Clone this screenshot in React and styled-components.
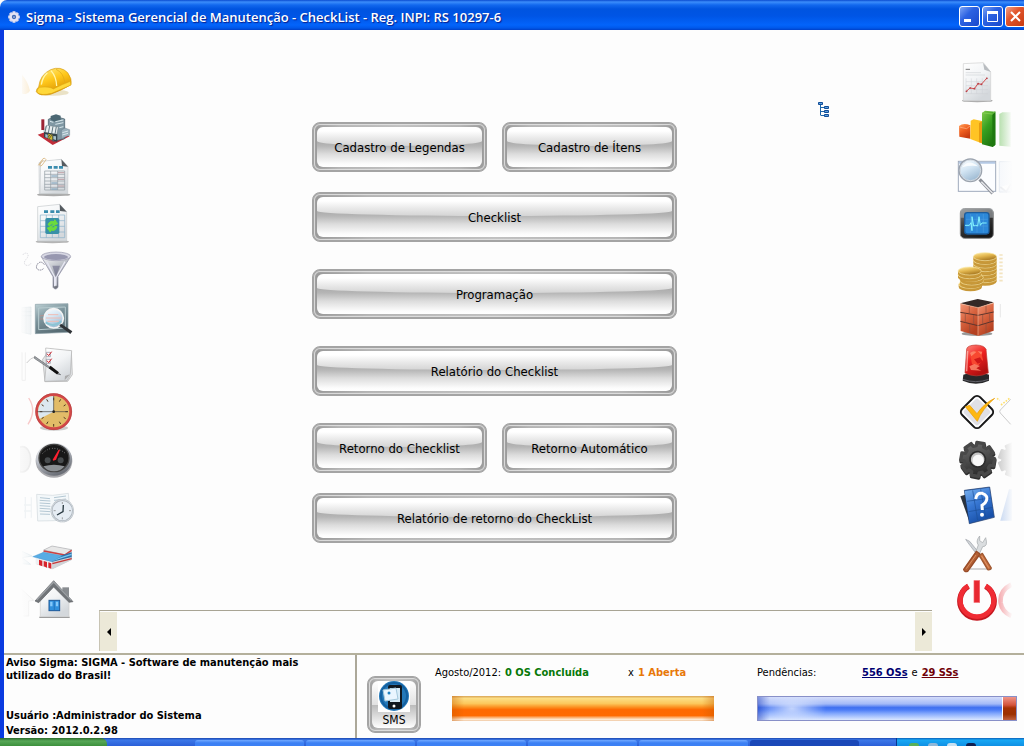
import React from "react";
import styled, { createGlobalStyle, css } from "styled-components";

const GlobalStyle = createGlobalStyle`
  *, *::before, *::after { box-sizing: border-box; }
  body { margin: 0; background: #fdfdfd; }
  button { font: inherit; color: inherit; padding: 0; border: 0; background: none; cursor: pointer; }
`;

const ui = `"DejaVu Sans Condensed", "DejaVu Sans", sans-serif`;

const Window = styled.div`
  display: flex;
  flex-direction: column;
  min-height: 100vh;
  background: #fdfdfd;
  color: #000;
  font-family: ${ui};
  font-size: 11px;
`;

const TitleBar = styled.header`
  display: flex;
  align-items: center;
  height: 30px;
  padding: 3px 0 0 7px;
  overflow: hidden;
  border-top-left-radius: 7px;
  background: linear-gradient(#0a4bd0 0, #3b8dfb 2px, #1268ee 5px, #0054e0 9px, #0055e5 16px, #0364fb 25px, #0058ea 28px, #0040c8 30px);
`;

const Title = styled.h1`
  flex: 1;
  margin: 0 0 0 5px;
  color: #fff;
  font: 600 13px/20px "Open Sans", "Noto Sans", sans-serif;
  text-shadow: 1px 1px 1px #0a1f8a;
  white-space: nowrap;
`;

const Controls = styled.div`
  display: flex;
  gap: 2px;
  margin-right: -2px;
`;

const ControlButton = styled.button`
  display: flex;
  width: 21px;
  height: 21px;
  border: 1px solid #fff;
  border-radius: 3px;
  background: ${(p) =>
    p.$close
      ? "linear-gradient(135deg, #f0a088, #e2552c 40%, #c63a10)"
      : "linear-gradient(135deg, #7da4f5, #2c62e2 40%, #1a48cc)"};
`;

const Frame = styled.div`
  flex: 1;
  display: flex;
  flex-direction: column;
  border-left: 4px solid #0a3be0;
`;

const Workspace = styled.main`
  flex: 1;
  display: flex;
`;

const SideBar = styled.nav`
  display: flex;
  flex-direction: column;
  flex: none;
  width: ${(p) => (p.$right ? 92 : 95)}px;
  padding: 29px 0 0 ${(p) => (p.$right ? 24 : 16)}px;
`;

const IconButton = styled.button`
  display: block;
  width: 56px;
  height: 47px;
  svg { display: block; width: 56px; height: 47px; }
`;

const Center = styled.div`
  flex: 1;
  display: flex;
  flex-direction: column;
`;

const Canvas = styled.div`
  flex: 1;
  display: grid;
  grid-template-columns: 213fr minmax(auto, 365px) 255fr;
  padding-top: 72px;
  align-items: start;
`;

const Menu = styled.div`
  grid-column: 2;
  display: grid;
  gap: 27px;
  margin-top: 20px;
`;

const MenuGroup = styled.div`
  display: grid;
  gap: 20px;
`;

const Pair = styled.div`
  display: grid;
  grid-template-columns: 1fr 1fr;
  gap: 15px;
`;

const glossFrame = css`
  border: 1px solid #a4a4a4;
  border-radius: 8px;
  background: linear-gradient(90deg, #989898, #b4b4b4 15%, #c0c0c0 50%, #b4b4b4 85%, #989898);
  box-shadow: inset 0 0 0 1px #a4a4a4, inset 0 0 1px 2px #e0e0e0;
`;

const GlossButton = styled.button`
  ${glossFrame}
  height: 50px;
  padding: 4px;
  font-size: 13px;
`;

const GlossFace = styled.span`
  position: relative;
  display: flex;
  align-items: center;
  justify-content: center;
  height: 40px;
  overflow: hidden;
  border-radius: 6px;
  background: linear-gradient(#a8a8a8 13px, #b6b6b6 19px, #dcdcdc 27px, #fcfcfc 37px, #fff);
  &::before {
    content: "";
    position: absolute;
    inset: 0 0 auto;
    height: 19px;
    border-radius: 0 0 50% 50% / 0 0 5px 5px;
    background: linear-gradient(#fff 4px, #eaeaea 11px, #d4d4d4);
  }
`;

const GlossLabel = styled.span`
  position: relative;
`;

const TreeButton = styled.button`
  justify-self: start;
  margin-left: 141px;
  svg { display: block; }
`;

const Strip = styled.div`
  display: flex;
  justify-content: space-between;
  height: 41px;
  margin-bottom: 2px;
  padding-top: 1px;
  border-top: 1px solid #a8a494;
  border-left: 1px solid #c8c4b4;
`;

const StripArrow = styled.button`
  display: flex;
  align-items: center;
  justify-content: center;
  width: 17px;
  background: #ece9d8;
`;

const Footer = styled.footer`
  display: flex;
  border-top: 2px solid #b4b09c;
`;

const Notice = styled.section`
  display: flex;
  flex-direction: column;
  justify-content: space-between;
  flex: none;
  width: 353px;
  height: 83px;
  padding: 1px 0 0 2px;
  border-right: 2px solid #aca899;
  font-weight: 700;
  p { margin: 0; line-height: 13px; }
  div p { line-height: 15px; }
`;

const Status = styled.section`
  flex: 1;
  display: flex;
  padding: 9px 7px 0 10px;
`;

const SmsButton = styled.button`
  ${glossFrame}
  flex: none;
  width: 54px;
  height: 57px;
  margin: 12px 14px 0 0;
  padding: 4px;
  font-size: 12px;
`;

const SmsFace = styled.span`
  display: flex;
  flex-direction: column;
  align-items: center;
  height: 47px;
  border-radius: 6px;
  background: linear-gradient(#fff, #e2e2e2 50%, #bcbcbc 52%, #fff);
  line-height: 16px;
`;

const Meter = styled.div`
  flex: ${(p) => p.$grow} 1 0;
  margin-left: ${(p) => p.$gap || 0}px;
`;

const MeterText = styled.div`
  display: flex;
  height: 16px;
  margin-bottom: 16px;
  line-height: 18px;
  white-space: nowrap;
`;

const Caption = styled.span`
  min-width: ${(p) => p.$width || 0}px;
`;

const Count = styled.strong`
  min-width: ${(p) => p.$width || 0}px;
  color: ${(p) => p.$color};
`;

const CountLink = styled.a`
  color: ${(p) => p.$color};
  font-weight: 700;
  margin-right: 4px;
`;

const Joiner = styled.span`
  margin-right: 4px;
`;

const OrangeBar = styled.div`
  height: 25px;
  margin-left: 17px;
  background:
    linear-gradient(90deg, rgba(200, 90, 0, 0.4), transparent 12px, transparent calc(100% - 12px), rgba(200, 90, 0, 0.4)),
    linear-gradient(#e0b060 1px, #fce088 2px, #fcc85c 30%, #fc9020 45%, #fe6800 55%, #fe6a00 78%, #fcc08c 88%, #fff4e4 96%, #e8b080);
`;

const SplitBar = styled.div`
  display: flex;
  height: 25px;
  border: 1px solid #8890c8;
`;

const BlueSegment = styled.div`
  flex: 556 1 0;
  background:
    radial-gradient(ellipse 34px 20px at 34px 50%, rgba(216, 228, 255, 0.85), transparent),
    linear-gradient(90deg, rgba(40, 70, 190, 0.5), transparent 12px),
    linear-gradient(#d4dcfa, #a4baf8 30%, #4070f0 46%, #4c7cf6 56%, #84a8fc 72%, #dce8ff);
`;

const RedSegment = styled.div`
  flex: 29 1 0;
  border-left: 1px solid #fff;
  background: linear-gradient(#f09488, #d4543c 35%, #a43004 48%, #9c3000 75%, #c06040);
`;

const TaskBar = styled.div`
  display: flex;
  height: 8px;
  background: linear-gradient(#1c48b0, #3c78e8 2px, #2a5fd8);
`;

const Start = styled.div`
  width: 107px;
  margin-right: 88px;
  border-top-right-radius: 6px;
  background: linear-gradient(#2c6a2c, #58a858 3px, #3c903c);
`;

const Task = styled.div`
  flex: 0 1 109px;
  margin: 2px 2px 0 0;
  border-radius: 3px 3px 0 0;
  background: ${(p) => (p.$active ? "#1a48b8" : "linear-gradient(#70a8ff, #3c80f4 3px)")};
`;

const Tray = styled.div`
  display: flex;
  align-items: flex-end;
  justify-content: space-between;
  flex: 0 0 128px;
  margin-left: auto;
  padding: 0 48px 0 12px;
  border-left: 1px solid #0a3890;
  background: linear-gradient(#0c60b8, #18a8f4 2px, #1090e4);
`;

const TrayDot = styled.i`
  width: 10px;
  height: 3px;
  border-radius: 4px 4px 0 0;
  background: ${(p) => p.$color};
`;

/* Shared gradients for the icon set */
const GRADIENTS = {
  yellow: ["#fff08a", "#ffc81c", "#d89000"],
  steel: ["#fafafa", "#b8bcc4", "#6c7078"],
  paper: ["#ffffff", "#f2f4f6", "#d4d8dc"],
  red: ["#ff8c80", "#ee2020", "#b01010"],
  green: ["#86cc50", "#38a020", "#207810"],
  orange: ["#ffa05c", "#f06020", "#c83c10"],
  blue: ["#a0dcff", "#3890dc", "#1450a4"],
  dark: ["#888888", "#3c3c3c", "#181818"],
  gear: ["#707070", "#505050", "#2c2c2c"],
  glass: ["#ffffff", "#d4e6f4", "#a0bcd4"],
  gold: ["#ffeca0", "#e4b850", "#a87820"],
  brick: ["#f49878", "#d86440", "#b44020"],
  screen: ["#bcd0d4", "#7c949c", "#586c74"],
  help: ["#7cb4f0", "#3878d4", "#1850a8"],
};

const Defs = () => (
  <svg width="0" height="0" aria-hidden="true" style={{ display: "block", height: 0 }}>
    <defs>
      {Object.entries(GRADIENTS).map(([name, [a, b, c]]) => (
        <linearGradient key={name} id={name} x1="0" y1="0" x2="0.5" y2="1">
          <stop offset="0" stopColor={a} />
          <stop offset="0.5" stopColor={b} />
          <stop offset="1" stopColor={c} />
        </linearGradient>
      ))}
      <linearGradient id="fadeLeft">
        <stop offset="0" stopColor="#fdfdfd" />
        <stop offset="1" stopColor="#fdfdfd" stopOpacity="0.5" />
      </linearGradient>
      <linearGradient id="fadeRight">
        <stop offset="0" stopColor="#fdfdfd" stopOpacity="0.4" />
        <stop offset="1" stopColor="#fdfdfd" />
      </linearGradient>
    </defs>
  </svg>
);

const g = (name) => `url(#${name})`;

const Sheet = () => (
  <>
    <ellipse cx="161" cy="404" rx="50" ry="5" fill="#aaa" />
    <path d="M122 304l62-6 20 22-1 81h-83z" fill={g("paper")} stroke="#c4c8cc" strokeWidth="2" />
    <path d="M184 298l20 22-18-2z" fill="#555b60" />
    <path d="M144 318h12v8h-12zM161 318h12v8h-12zM177 318h12v8h-12z" fill="#3a8cae" />
  </>
);

const leftIcons = [
  ["Capacete", -3, (
    <>
      <path d="M66 44q18 20 24 48q-10 14-24 9z" fill="#f8d8a0" />
      <rect x="58" y="40" width="40" height="66" fill={g("fadeLeft")} />
      <ellipse cx="160" cy="98" rx="46" ry="9" fill="#d8c890" opacity=".5" />
      <path d="M116 81q4-37 36-52q30-12 51 9q14 19 10 36q-22 14-61 29q-34 7-43-8q0-9 7-14z" fill={g("yellow")} stroke="#d49a10" strokeWidth="2" />
      <path d="M118 82q31-4 42 5q29-15 51-23l2 11q-28 12-58 25q-33 8-44-3q-1-8 7-15z" fill="#ffd83a" stroke="#d8a010" strokeWidth="1.5" />
      <path d="M142 38q-15 14-18 36M153 32q16 18 17 46" fill="none" stroke="#fff6ac" strokeWidth="4" />
      <path d="M168 28q23 10 26 39" fill="none" stroke="#e0a818" strokeWidth="2" />
    </>
  )],
  ["Fábrica", 138, (
    <>
      <path d="M113 224l47-16 49 21-51 26z" fill="#c02c38" />
      <path d="M124 178h9v32h-9z" fill="#9c2434" />
      <path d="M145 178l20-9 29 8v59l-34 8-15-12z" fill="#8098a4" stroke="#3c5460" strokeWidth="2" />
      <path d="M152 168l16-5 14 4v13l-17 5-13-5z" fill="#4c6874" />
      <path d="M184 210l11-6 14 5v17l-25 10z" fill="#9ab0bc" stroke="#506874" />
      <path d="M131 213l9-17 35 5-5 23-35-5z" fill="#e8eef0" stroke="#506068" />
      <path d="M139 197l-4 20M149 198l-4 21M159 199l-4 22M169 200l-4 22" stroke="#607880" strokeWidth="3" />
      <path d="M132 216l40 7v23l-40-14z" fill="#34444c" />
      <path d="M136 222l7 2v10l-7-2zM160 228l8 1v11l-8-2z" fill="#a8c4cc" />
      <path d="M145 221l12 3v16l-12-4z" fill="#d4bc30" />
      <path d="M147 237l9-13M145 231l7-9" stroke="#333" strokeWidth="2" />
      <path d="M150 184l10 3M166 185l24-5M166 193l24-5M178 203l12-3M187 218l17-5M187 225l17-5" stroke="#d8e8ec" strokeWidth="3" />
    </>
  )],
  ["Planilha", 279, (
    <>
      <path d="M117 308l67-9v103h-66z" fill="#eef0f2" stroke="#c4c8cc" strokeWidth="2" />
      <Sheet />
      <path d="M134 333h60v57h-60zM134 343h60M134 353h60M134 363h60M134 373h60M134 382h60M152 333v57M173 333v57" fill="none" stroke="#909aa2" strokeWidth="2" />
      <path d="M174 338h19M174 358h19M174 378h19" stroke="#a87880" strokeWidth="2" />
      <path d="M154 348h18M154 369h18M154 387h18" stroke="#7098b4" strokeWidth="3" />
      <path d="M115 316l14-20q6-4 9 3l-12 17q-5 4-8-1l12-15" fill="none" stroke="#d8b47c" strokeWidth="2.5" />
    </>
  )],
  ["Planilha atualizada", 420, (
    <>
      <ellipse cx="157" cy="545" rx="50" ry="5" fill="#b4b4b4" />
      <path d="M113 440l66-7 21 22v88h-87z" fill={g("paper")} stroke="#c4c8cc" strokeWidth="2" />
      <path d="M179 433l21 22-20-2z" fill="#555b60" />
      <path d="M132 451h12v8h-12zM151 451h12v8h-12zM168 451h11v8h-11z" fill="#3a8cae" />
      <path d="M121 465h73v68h-73zM121 482h73M121 499h73M121 516h73M139 465v68M157 465v68M176 465v68" fill="none" stroke="#8ab0c8" strokeWidth="2" />
      <rect x="136" y="474" width="42" height="48" rx="5" fill="#3890a8" />
      <path d="M144 495q5-15 19-10l1-6 9 12-15 7 2-6q-7-3-9 4zM171 500q-5 15-19 10l-1 6-9-12 15-7-2 6q7 3 9-4z" fill="#6cdc3c" stroke="#6cdc3c" strokeWidth="3" />
    </>
  )],
  ["Filtro", 6, (
    <>
      <path d="M68 30q8-10 17-2q-2 13-10 18q-5 13 5 15q13 1 13-10" fill="none" stroke="#c8c8d0" strokeWidth="2" strokeDasharray="4 3" />
      <path d="M133 59q-8-12-18-5q-11 13-1 20q11 4 18-5" fill="none" stroke="#8c8c9c" strokeWidth="3" strokeDasharray="5 2" />
      <path d="M124 35l35 60v32q7 10 15 0V94l37-58z" fill={g("steel")} stroke="#8888a0" strokeWidth="2" />
      <path d="M141 51l23 45v28M195 50l-27 47v25" fill="none" stroke="#e8e8f4" strokeWidth="4" />
      <path d="M157 62l11 34 12-34" fill="#70708c" opacity=".65" />
      <ellipse cx="168" cy="34" rx="44" ry="13" fill="#d8d8e4" stroke="#9898ac" strokeWidth="2" />
      <ellipse cx="168" cy="36" rx="36" ry="9" fill="#9898b0" />
    </>
  )],
  ["Pesquisa em tela", 147, (
    <>
      <path d="M65 188l28-2v82l-28-6z" fill="#dce4e8" stroke="#b8c8d0" strokeWidth="2" />
      <path d="M78 186v80M65 200h29M65 212h29" stroke="#a8b8c0" />
      <rect x="60" y="180" width="40" height="90" fill={g("fadeLeft")} />
      <path d="M106 178l98-2v86l-98 4z" fill={g("screen")} stroke="#8ca0a8" strokeWidth="2" />
      <path d="M116 189l80-3v63l-80 5z" fill="none" stroke="#b8ccd0" strokeWidth="3" />
      <path d="M119 222h16M119 213l15-2" stroke="#c88880" strokeWidth="2" />
      <circle cx="161" cy="220" r="29" fill={g("glass")} stroke="#f4f4f4" strokeWidth="5" />
      <path d="M144 209h31M138 219h45M142 229h35" stroke="#f0bcb4" strokeWidth="3" />
      <path d="M137 232q23 17 47-3" stroke="#8cc4d4" strokeWidth="6" fill="none" />
      <path d="M183 236l34 23-6 8-33-25z" fill="#303438" />
    </>
  )],
  ["Lista de verificação", 288, (
    <>
      <path d="M66 322v84h10v-84" fill="none" stroke="#f0f0f0" strokeWidth="3" />
      <path d="M214 319l-64-7-22 31 7 67 68-1 14-20z" fill="#e4e6e8" stroke="#aaa" strokeWidth="2" />
      <path d="M137 309l78 8-4 72-10 18-67 2 5-53z" fill={g("paper")} stroke="#b0b0b0" strokeWidth="2" />
      <path d="M210 388l-15 5-1 13z" fill="#aaa" />
      <path d="M139 322h12v13h-12zM139 343h12v12h-12z" fill="#fff" stroke="#889" strokeWidth="2" />
      <path d="M141 326l5 6 9-12M141 347l5 6 9-12" fill="none" stroke="#d02028" strokeWidth="3" />
      <path d="M104 334l78 55-7-1-72-48z" fill="#a0a4a8" stroke="#606468" strokeWidth="2" />
      <path d="M149 366l25 19" stroke="#101010" strokeWidth="9" />
      <path d="M80 354q13-16 22-17" fill="none" stroke="#ccc" strokeWidth="3" />
    </>
  )],
  ["Relógio", 429, (
    <>
      <path d="M86 459q25 37-2 79" fill="none" stroke="#f8c8c8" strokeWidth="4" />
      <ellipse cx="162" cy="549" rx="42" ry="8" fill="#ccc" />
      <circle cx="161" cy="500" r="51" fill="#e2bc68" stroke="#d44848" strokeWidth="8" />
      <circle cx="161" cy="500" r="54" fill="none" stroke="#a84040" strokeWidth="1.5" />
      <path d="M161 500V453a47 47 0 0 0-42 68z" fill="#dce8f0" />
      <path d="M161 458v8M161 537v8M119 500h8M196 500h8M140 463l4 7M182 463l-4 7M125 479l6 4M197 479l-6 4M125 521l6-4M197 521l-6-4M140 537l4-7M182 537l-4-7" stroke="#503820" strokeWidth="3" />
      <path d="M161 453v51M112 500h91" stroke="#404040" strokeWidth="2" />
      <circle cx="161" cy="500" r="4" fill="#222" />
    </>
  )],
  ["Medidor", 0, (
    <>
      <ellipse cx="67" cy="73" rx="25" ry="38" fill="#e8e8e8" stroke="#d0d0d0" strokeWidth="5" />
      <rect x="38" y="24" width="62" height="100" fill={g("fadeLeft")} />
      <ellipse cx="162" cy="78" rx="55" ry="50" fill="#a8a8ac" />
      <ellipse cx="162" cy="73" rx="54" ry="49" fill={g("steel")} />
      <ellipse cx="162" cy="69" rx="45" ry="41" fill="#181818" stroke="#444" strokeWidth="4" />
      <path d="M130 94q32-10 64 0-11 15-32 15-22 0-32-15z" fill="#8c9094" />
      <circle cx="143" cy="76" r="9" fill="#484c4e" />
      <circle cx="182" cy="76" r="9" fill="#484c4e" />
      <path d="M128 55q30-30 68 0" fill="none" stroke="#aaa" strokeWidth="3" strokeDasharray="2 6" />
      <path d="M158 74l18-30 4 1-12 29-8 3z" fill="#ff2030" />
    </>
  )],
  ["Agenda", 141, (
    <>
      <path d="M76 186v64M94 187v61M72 210h24M72 228h24" stroke="#f0f3f5" strokeWidth="4" fill="none" />
      <path d="M110 178l48 3 47-6 6 76-48 6-50 1z" fill="#f4f8fa" stroke="#d0d8dc" strokeWidth="2" />
      <path d="M120 188l30 3M119 196l32 2M119 204l32 2M119 212l32 2M119 220l32 2M119 228l32 2M120 237l30 1M162 188l36-5M162 196l36-4" stroke="#b4c8d4" strokeWidth="3" />
      <circle cx="187" cy="227" r="32" fill="#e6edf4" stroke="#b0b8c0" strokeWidth="6" />
      <circle cx="187" cy="227" r="33" fill="none" stroke="#e4e8ec" strokeWidth="2" />
      <path d="M187 201v6M187 247v6M161 227h6M207 227h6" stroke="#777" strokeWidth="2" />
      <path d="M190 210l-1 20-18 10" fill="none" stroke="#283840" strokeWidth="4" />
    </>
  )],
  ["Armazém", 282, (
    <>
      <path d="M66 349l30 14-30 5 26 20-24-2" fill="#e4eef2" stroke="#c8d8e0" strokeWidth="3" />
      <rect x="60" y="345" width="40" height="50" fill={g("fadeLeft")} />
      <path d="M132 345l24-12 59 11v30l-59 29-48-16z" fill="#c8ccd0" />
      <path d="M131 345l25-12 59 11-21 15z" fill="#e8e8e8" stroke="#b0b0b4" strokeWidth="2" />
      <path d="M131 348l63 12 21-14" fill="none" stroke="#d04040" strokeWidth="4" />
      <path d="M150 372l65-20v20l-57 12z" fill="#3070a8" />
      <path d="M158 376l57-18" stroke="#78c8f0" strokeWidth="4" />
      <path d="M107 368l50 12v23l-50-17z" fill="#eef0f2" />
      <path d="M157 380l58-14v9l-58 28z" fill="#d0d4d8" />
      <path d="M157 386l58-15" stroke="#c83838" strokeWidth="4" />
      <path d="M98 365l32-13 57 10-32 18z" fill="#58ace4" stroke="#3c90cc" />
      <path d="M117 374l10 3v17l-10-4zM131 378l10 3v17l-10-4zM145 382l9 3v16l-9-3z" fill="#d8242c" />
    </>
  )],
  ["Início", 423, (
    <>
      <path d="M64 462l37 34-15 2v45H70" fill="#f4f4f4" stroke="#dcdcdc" strokeWidth="3" />
      <rect x="60" y="450" width="44" height="98" fill={g("fadeLeft")} />
      <path d="M118 547h91" stroke="#999" strokeWidth="4" />
      <path d="M187 457h20v34h-20z" fill="#888c90" />
      <path d="M121 490l40-42 46 46v51h-86z" fill={g("paper")} stroke="#ccc" strokeWidth="2" />
      <path d="M105 498l56-61 58 63-12 2-46-46-45 47z" fill="#707478" stroke="#606468" strokeWidth="2" />
      <path d="M110 495l51-54 53 55" fill="none" stroke="#9ca0a4" strokeWidth="4" />
      <rect x="147" y="496" width="32" height="31" fill="#3090dc" stroke="#1c5898" strokeWidth="3" />
      <path d="M163 498v27" stroke="#1c68b0" strokeWidth="2" />
      <path d="M154 500v14M171 500v14" stroke="#84c8fa" strokeWidth="7" />
    </>
  )],
];

/* Eight broad teeth around a round body */
const gearPath = (() => {
  const pts = [];
  for (let i = 0; i < 8; i++) {
    const a = (i * Math.PI) / 4;
    [[-0.28, 41], [-0.22, 51], [0.22, 51], [0.28, 41]].forEach(([d, r]) => {
      pts.push(`${(Math.cos(a + d) * r).toFixed(1)} ${(Math.sin(a + d) * r).toFixed(1)}`);
    });
  }
  return `M${pts.join("L")}Z`;
})();

const Coins = ({ x, y, n }) =>
  Array.from({ length: n }, (_, i) => (
    <g key={i}>
      <path d={`M${x - 35} ${y - i * 11}v8a35 13 0 0 0 70 0v-8z`} fill="#c89838" />
      <ellipse cx={x} cy={y - i * 11} rx="35" ry="12" fill={g("gold")} stroke="#fae8a8" strokeWidth="2" />
    </g>
  ));

const rightIcons = [
  ["Relatório gráfico", 12, (
    <>
      <ellipse cx="112" cy="137" rx="46" ry="5" fill="#aaa" />
      <path d="M70 26l60-3 22 28v86H70z" fill={g("paper")} stroke="#d0d0d0" strokeWidth="2" />
      <path d="M129 23l24 28-20-7z" fill="#b8bcc0" />
      <path d="M77 43h13" stroke="#777" strokeWidth="3" />
      <path d="M77 53h46M77 60h58" stroke="#d0d4d8" strokeWidth="2" />
      <path d="M78 70v46h66M78 104h66M78 92h66M78 80h66M94 70v46M110 70v46M127 70v46" fill="none" stroke="#ccd0d4" strokeWidth="1.5" />
      <path d="M79 109l11-10 13 2 11-15 10 2 16-18" fill="none" stroke="#d44c4c" strokeWidth="3" />
      <path d="M79 109h1M90 99h1M103 101h1M114 86h1M124 88h1M140 70h1" stroke="#b84048" strokeWidth="5" strokeLinecap="round" />
    </>
  )],
  ["Gráfico de barras", 153, (
    <>
      <path d="M178 177l9-5h25v103l-34-3z" fill="#80c870" />
      <rect x="174" y="166" width="44" height="114" fill={g("fadeRight")} />
      <path d="M57 213q13-11 34-2v40l-33-6z" fill={g("orange")} />
      <path d="M58 216l22 5 11-9" fill="none" stroke="#ffb88c" strokeWidth="2" />
      <path d="M92 197l9-4 28 6v67l-38-14z" fill="#ffc424" />
      <path d="M117 204l11-6v67l-11-3z" fill="#e89c10" />
      <path d="M126 174l9-7 31 3v100l-8 6-32-8z" fill={g("green")} />
      <path d="M157 177l9-8v100l-9 7z" fill="#1f7810" />
      <path d="M127 174l30 3 8-7" fill="none" stroke="#80cc50" strokeWidth="3" />
    </>
  )],
  ["Localizar", 294, (
    <>
      <path d="M178 320h36v91h-36z" fill="#f0f4fa" stroke="#d4dce8" strokeWidth="3" />
      <path d="M181 396l18 14 14-24" fill="#fff" stroke="#dadde4" strokeWidth="5" />
      <rect x="174" y="314" width="44" height="104" fill={g("fadeRight")} />
      <rect x="55" y="319" width="112" height="90" fill="#fcfdff" stroke="#a0aabc" strokeWidth="3" />
      <path d="M57 323h108" stroke="#b4c8e4" strokeWidth="6" />
      <path d="M119 373l39 42" stroke="#8c9098" strokeWidth="10" />
      <path d="M124 380l34 35" stroke="#e8e8ec" strokeWidth="4" />
      <circle cx="91" cy="346" r="33" fill={g("glass")} stroke="#9ba3ae" strokeWidth="6" />
      <circle cx="91" cy="346" r="31" fill="none" stroke="#eef4fa" strokeWidth="2" />
      <path d="M66 337q20-27 48-3-21-4-48 3" fill="#fff" opacity=".8" />
    </>
  )],
  ["Monitor", 435, (
    <>
      <rect x="61" y="461" width="99" height="89" rx="13" fill={g("dark")} stroke="#888" strokeWidth="3" />
      <path d="M69 460h83q8 1 8 10v18H61v-18q1-9 8-10z" fill="#aeb4b8" opacity=".55" />
      <rect x="74" y="473" width="73" height="64" rx="8" fill="#2c88d8" stroke="#1c5c9c" strokeWidth="4" />
      <path d="M78 493h65M78 513h65M92 477v56M111 477v56M130 477v56" stroke="#55a0e0" strokeWidth="1.5" />
      <path d="M75 511h13l5-8 3 24 0-42 5 28 6-2 6 2 4-28 4 26 5-7h14" fill="none" stroke="#84f4ff" strokeWidth="3" />
    </>
  )],
  ["Moedas", 6, (
    <>
      <path d="M178 30h10M178 41h10M178 52h10M178 63h10M178 74h10M178 85h10M178 96h10M178 107h10" stroke="#e8c878" strokeWidth="5" opacity=".45" />
      <Coins x={135} y={101} n={7} />
      <Coins x={91} y={118} n={1} />
      <Coins x={95} y={108} n={2} />
      <Coins x={89} y={89} n={2} />
    </>
  )],
  ["Tijolos", 147, (
    <>
      <path d="M181 177v40" stroke="#ddd" strokeWidth="2" />
      <ellipse cx="111" cy="266" rx="46" ry="7" fill="#999" />
      <path d="M61 175l52-13 48 10-47 17z" fill="#342826" />
      <path d="M61 176l53 12v84l-52-14z" fill={g("brick")} />
      <path d="M114 188l47-14v83l-47 16z" fill={g("brick")} />
      <path d="M61 202l53 9 47-10M61 229l53 13 47-14" fill="none" stroke="#5c342c" strokeWidth="3" />
      <path d="M88 182v24M76 205v28M101 210v28M89 236v28M138 181v25M128 210v27M149 205v27M138 236v29" fill="none" stroke="#8c5040" strokeWidth="2" />
      <path d="M61 176l53 12 47-14M114 188v84" fill="none" stroke="#efb091" strokeWidth="2" />
    </>
  )],
  ["Alarme", 288, (
    <>
      <path d="M70 389q41-14 77 0v18q-39 18-79 0z" fill="#28282a" />
      <path d="M69 403q38 14 77 0" fill="none" stroke="#606068" strokeWidth="3" />
      <path d="M80 312q2-11 28-12 25 1 30 13l7 71q-37 17-70 0z" fill={g("red")} stroke="#c03830" strokeWidth="2" />
      <path d="M91 330l16-14 17 8 5 21-14 16-19-3z" fill="#f84830" />
      <path d="M90 324q10-9 19-3l-15 13zM113 318l14 2-3 9zM88 364l15-7 17 6-11 7 15 7-31-2z" fill="#ff9070" opacity=".8" />
      <path d="M102 343l18-6 9 13-16 6z" fill="#d01818" />
      <path d="M83 318l-3 61" stroke="#ffc4b8" strokeWidth="4" opacity=".7" />
    </>
  )],
  ["Aprovar", 429, (
    <>
      <path d="M212 463l-31 32q-4 5 0 9l31 34" fill="none" stroke="#ccc" strokeWidth="3" />
      <path d="M171 460l8 6M183 480l27-21" stroke="#ffe070" strokeWidth="5" strokeDasharray="5 4" />
      <rect x="73" y="463" width="76" height="76" rx="13" transform="rotate(45 111 501)" fill="#e0e0e6" stroke="#181818" strokeWidth="6" />
      <rect x="79" y="469" width="64" height="64" rx="8" transform="rotate(45 111 501)" fill="none" stroke="#fff" strokeWidth="4" />
      <path d="M76 485l13-4 22 25q22-32 53-46-37 31-52 69z" fill="#fdb813" stroke="#e89800" strokeWidth="2" />
    </>
  )],
  ["Configurações", 0, (
    <>
      <g transform="translate(228 75) rotate(22)"><path d={gearPath} fill="#a0a0a0" stroke="#a0a0a0" strokeWidth="8" strokeLinejoin="round" /></g>
      <rect x="168" y="10" width="50" height="120" fill={g("fadeRight")} />
      <g transform="translate(114 78) rotate(10)"><path d={gearPath} fill="#303030" stroke="#303030" strokeWidth="10" strokeLinejoin="round" /></g>
      <g transform="translate(113 73) rotate(10)">
        <path d={gearPath} fill={g("gear")} stroke="#484848" strokeWidth="10" strokeLinejoin="round" />
        <circle r="23" fill="#c4c4c4" stroke="#2c2c2c" strokeWidth="5" />
        <circle r="17" cx="2" cy="3" fill="#f8f8f8" />
      </g>
    </>
  )],
  ["Ajuda", 141, (
    <>
      <path d="M207 163h12v94h-38z" fill="#a0bce8" />
      <rect x="176" y="155" width="44" height="110" fill={g("fadeRight")} />
      <path d="M61 184l22-7 17 85-10 2z" fill="#2a333e" />
      <path d="M73 166l76-10 14 91-75 19z" fill="#2458a8" stroke="#1c3868" strokeWidth="2" />
      <path d="M74 168l74-10 13 87-72 18z" fill={g("help")} />
      <path d="M98 166l15 90M122 163l16 87M81 199l71-10M86 230l72-13" stroke="#1c5098" strokeWidth="2" />
      <path d="M107 192q3-20 20-17 18 6 12 22-3 9-13 14l1 14" fill="none" stroke="#fff" strokeWidth="9" />
      <circle cx="126" cy="239" r="6" fill="#fff" />
    </>
  )],
  ["Ferramentas", 282, (
    <>
      <path d="M80 402h75" stroke="#ccc" strokeWidth="5" />
      <path d="M77 313l12 6 35 43-7 5-34-45z" fill="#d0d4d8" stroke="#9ca0a8" strokeWidth="2" />
      <path d="M119 303q-13 16-4 27l-9 24 10 7 12-26q17 0 9-27l-9 15-9-6z" fill="#dadddf" stroke="#a0a4a8" strokeWidth="2" />
      <path d="M109 349l11 8-37 52q-10 3-12-6z" fill="#b46034" stroke="#984c28" strokeWidth="4" strokeLinejoin="round" />
      <path d="M118 362l9-7 27 44q-3 7-11 5z" fill="#c87040" stroke="#a05830" strokeWidth="4" strokeLinejoin="round" />
      <path d="M108 360l-29 41M125 363l21 35" stroke="#eca878" strokeWidth="2" />
    </>
  )],
  ["Sair", 423, (
    <>
      <path d="M214 449q-36 18-32 55 4 26 32 39" fill="none" stroke="#ee6068" strokeWidth="14" />
      <rect x="170" y="436" width="48" height="118" fill={g("fadeRight")} />
      <path d="M85 454a51 51 0 1 0 52 0" fill="none" stroke="#c41820" strokeWidth="17" />
      <path d="M85 452a50 50 0 1 0 52 0" fill="none" stroke="#f02c34" strokeWidth="14" />
      <rect x="102" y="437" width="17" height="65" fill="#e82830" stroke="#f46068" strokeWidth="2" />
    </>
  )],
];

function IconRail({ label, icons, right }) {
  return (
    <SideBar $right={right} aria-label={label}>
      {icons.map(([name, top, art]) => (
        <IconButton key={name} type="button" aria-label={name}>
          <svg viewBox={`${right ? 48 : 60} ${top} 168 141`} aria-hidden="true">{art}</svg>
        </IconButton>
      ))}
    </SideBar>
  );
}

function Gloss({ children }) {
  return (
    <GlossButton type="button">
      <GlossFace><GlossLabel>{children}</GlossLabel></GlossFace>
    </GlossButton>
  );
}

export default function App() {
  return (
    <>
      <GlobalStyle />
      <Window>
        <Defs />
        <TitleBar>
          <svg width="14" height="14" viewBox="-65 -65 130 130" aria-hidden="true">
            <path d={gearPath} fill="#e4e4f4" stroke="#d0d4ee" strokeWidth="8" />
            <circle r="20" fill="#3c68b4" />
            <circle r="8" fill="#c0c8e4" />
          </svg>
          <Title>Sigma - Sistema Gerencial de Manutenção - CheckList - Reg. INPI: RS 10297-6</Title>
          <Controls>
            <ControlButton type="button" aria-label="Minimizar">
              <svg width="19" height="19" aria-hidden="true"><rect x="4" y="12" width="7" height="3" fill="#fff" /></svg>
            </ControlButton>
            <ControlButton type="button" aria-label="Maximizar">
              <svg width="19" height="19" aria-hidden="true"><path d="M4.500 4.500h10v10h-10z" fill="none" stroke="#fff" /><path d="M4 5.500h11" stroke="#fff" strokeWidth="3" /></svg>
            </ControlButton>
            <ControlButton type="button" $close aria-label="Fechar">
              <svg width="19" height="19" aria-hidden="true"><path d="M5 5l9 9M14 5l-9 9" stroke="#fff" strokeWidth="2" /></svg>
            </ControlButton>
          </Controls>
        </TitleBar>
        <Frame>
          <Workspace>
            <IconRail label="Cadastros" icons={leftIcons} />
            <Center>
              <Canvas>
                <Menu>
                  <MenuGroup>
                    <Pair>
                      <Gloss>Cadastro de Legendas</Gloss>
                      <Gloss>Cadastro de Ítens</Gloss>
                    </Pair>
                    <Gloss>Checklist</Gloss>
                  </MenuGroup>
                  <Gloss>Programação</Gloss>
                  <Gloss>Relatório do Checklist</Gloss>
                  <MenuGroup>
                    <Pair>
                      <Gloss>Retorno do Checklist</Gloss>
                      <Gloss>Retorno Automático</Gloss>
                    </Pair>
                    <Gloss>Relatório de retorno do CheckList</Gloss>
                  </MenuGroup>
                </Menu>
                <TreeButton type="button" aria-label="Estrutura">
                  <svg width="13" height="15" aria-hidden="true">
                    <path d="M2.500 3v10M2.500 5.500h4M2.500 9.500h4M2.500 13.500h4" fill="none" stroke="#1c64a8" />
                    <path d="M.5.500h4v2h-4zM6.500 4.500h4v2h-4zM6.500 8.500h4v2h-4zM6.500 12.500h4v2h-4z" fill="#5ca0dc" stroke="#104c98" />
                  </svg>
                </TreeButton>
              </Canvas>
              <Strip>
                <StripArrow type="button" aria-label="Anterior">
                  <svg width="4" height="8" aria-hidden="true"><path d="M4 0v8L0 4z" /></svg>
                </StripArrow>
                <StripArrow type="button" aria-label="Próximo">
                  <svg width="4" height="8" aria-hidden="true"><path d="M0 0v8l4-4z" /></svg>
                </StripArrow>
              </Strip>
            </Center>
            <IconRail label="Ferramentas" icons={rightIcons} right />
          </Workspace>
          <Footer>
            <Notice>
              <p>Aviso Sigma: SIGMA - Software de manutenção mais<br />utilizado do Brasil!</p>
              <div>
                <p>Usuário :Administrador do Sistema</p>
                <p>Versão: 2012.0.2.98</p>
              </div>
            </Notice>
            <Status>
              <SmsButton type="button">
                <SmsFace>
                  <svg width="32" height="32" aria-hidden="true">
                    <rect width="32" height="32" fill="#fff" />
                    <circle cx="16" cy="15" r="15" fill="#2478b8" />
                    <circle cx="16" cy="15" r="13" fill="none" stroke="#1460a0" strokeWidth="2" />
                    <rect x="10" y="4" width="14" height="24" rx="2" fill="#101820" />
                    <rect x="12" y="7" width="10" height="14" fill="#d8ecf8" />
                    <path d="M5 9l13-2 2 11-13 2z" fill="#eaf6ff" stroke="#a4c8dc" />
                    <circle cx="11" cy="12" r="1.500" fill="#2080c0" />
                    <circle cx="16" cy="25" r="1.500" fill="#fff" />
                  </svg>
                  SMS
                </SmsFace>
              </SmsButton>
              <Meter $grow={279}>
                <MeterText>
                  <Caption $width={70}>Agosto/2012:</Caption>
                  <Count $width={123} $color="#087808">0 OS Concluída</Count>
                  <Caption $width={10}>x</Caption>
                  <Count $color="#e87808">1 Aberta</Count>
                </MeterText>
                <OrangeBar />
              </Meter>
              <Meter $grow={260} $gap={43}>
                <MeterText>
                  <Caption $width={105}>Pendências:</Caption>
                  <CountLink href="#os" $color="#000070">556 OSs</CountLink>
                  <Joiner>e</Joiner>
                  <CountLink href="#ss" $color="#700008">29 SSs</CountLink>
                </MeterText>
                <SplitBar>
                  <BlueSegment />
                  <RedSegment />
                </SplitBar>
              </Meter>
            </Status>
          </Footer>
        </Frame>
        <TaskBar>
          <Start />
          <Task /><Task /><Task /><Task /><Task />
          <Task $active />
          <Tray>
            <TrayDot $color="#58b058" />
            <TrayDot $color="#90b8d8" />
            <TrayDot $color="#c8e0f0" />
            <TrayDot $color="#102050" />
          </Tray>
        </TaskBar>
      </Window>
    </>
  );
}
